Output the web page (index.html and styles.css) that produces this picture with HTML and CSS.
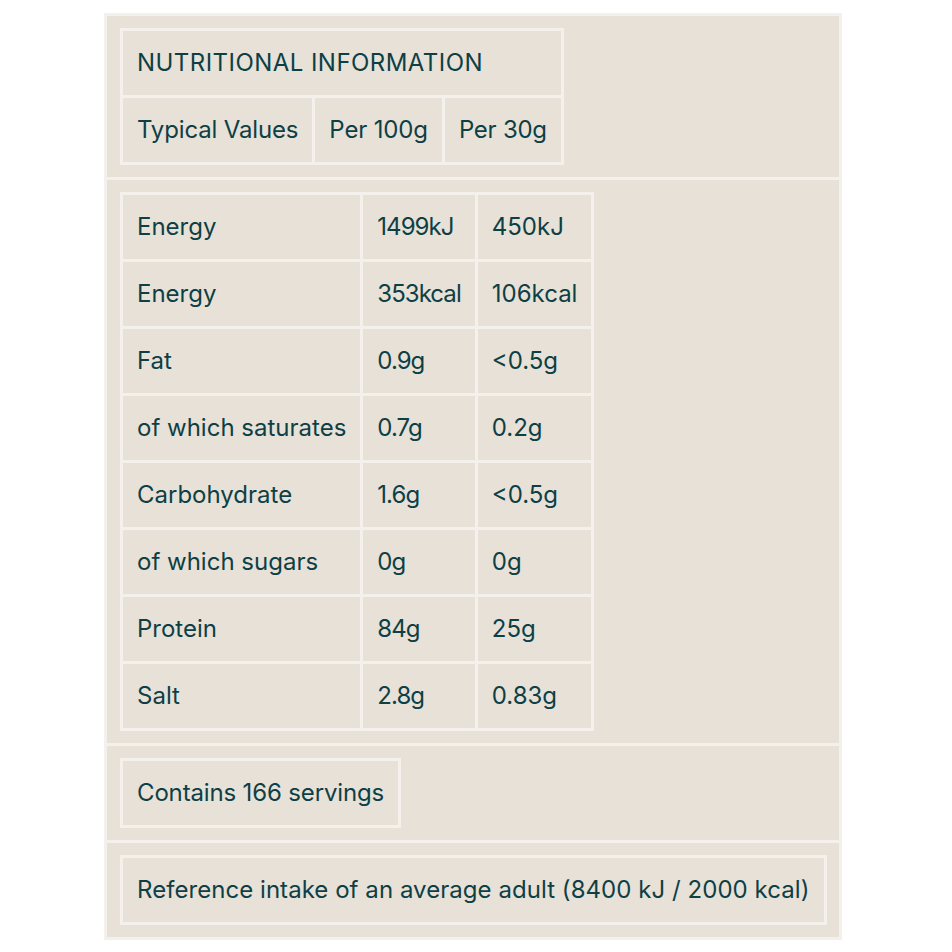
FILE: index.html
```html
<!DOCTYPE html>
<html lang="en">
<head>
<meta charset="utf-8">
<title>Nutritional Information</title>
<link rel="stylesheet" href="styles.css">
</head>
<body>
<div class="panel">
  <section class="section">
    <table class="nut-table head-table">
      <tr><th class="title" colspan="3">NUTRITIONAL INFORMATION</th></tr>
      <tr><th class="label">Typical Values</th><th class="per100">Per 100g</th><th class="per30">Per 30g</th></tr>
    </table>
  </section>
  <section class="section">
    <table class="nut-table">
      <tr><td>Energy</td><td class="per100">1499kJ</td><td class="per30">450kJ</td></tr>
      <tr><td>Energy</td><td class="per100">353kcal</td><td class="per30">106kcal</td></tr>
      <tr><td>Fat</td><td class="per100">0.9g</td><td class="per30">&lt;0.5g</td></tr>
      <tr><td>of which saturates</td><td class="per100">0.7g</td><td class="per30">0.2g</td></tr>
      <tr><td>Carbohydrate</td><td class="per100">1.6g</td><td class="per30">&lt;0.5g</td></tr>
      <tr><td>of which sugars</td><td class="per100">0g</td><td class="per30">0g</td></tr>
      <tr><td>Protein</td><td class="per100">84g</td><td class="per30">25g</td></tr>
      <tr><td>Salt</td><td class="per100">2.8g</td><td class="per30">0.83g</td></tr>
    </table>
  </section>
  <section class="section">
    <p class="note note-servings">Contains 166 servings</p>
  </section>
  <section class="section">
    <p class="note note-reference">Reference intake of an average adult (8400 kJ / 2000 kcal)</p>
  </section>
</div>
</body>
</html>
```
FILE: styles.css
```css
html, body {
  margin: 0;
  padding: 0;
  background: #ffffff;
}
body {
  font-family: "Inter", "Noto Sans", sans-serif;
  color: #0e3f45;
}
.panel {
  box-sizing: border-box;
  width: 738px;
  margin: 13px 0 0 104px;
  background: #e7e1d8;
  border: 3px solid #f4f1ec;
}
.section {
  padding: 12px 13px;
}
.section + .section {
  border-top: 3px solid #f4f1ec;
}
.nut-table {
  border-collapse: collapse;
  border: 3px solid #f4f1ec;
}
.nut-table th,
.nut-table td {
  border: 3px solid #f4f1ec;
  padding: 20px 14px;
  font-size: 24px;
  line-height: 24px;
  font-weight: 400;
  text-align: left;
  white-space: nowrap;
}
.nut-table .title {
  letter-spacing: 0.45px;
}
.nut-table .per100 {
  letter-spacing: -0.95px;
}
.nut-table .per30 {
  letter-spacing: 0;
}
.head-table .label {
  letter-spacing: -0.15px;
}
.head-table .per100 {
  letter-spacing: -0.15px;
}
.head-table .per30 {
  letter-spacing: -0.25px;
}
.note {
  display: inline-block;
  margin: 0;
  padding: 20px 14px;
  border: 3px solid #f4f1ec;
  font-size: 24px;
  line-height: 24px;
  white-space: nowrap;
}
.note-servings {
  letter-spacing: -0.15px;
}
.note-reference {
  letter-spacing: 0.05px;
}
```
